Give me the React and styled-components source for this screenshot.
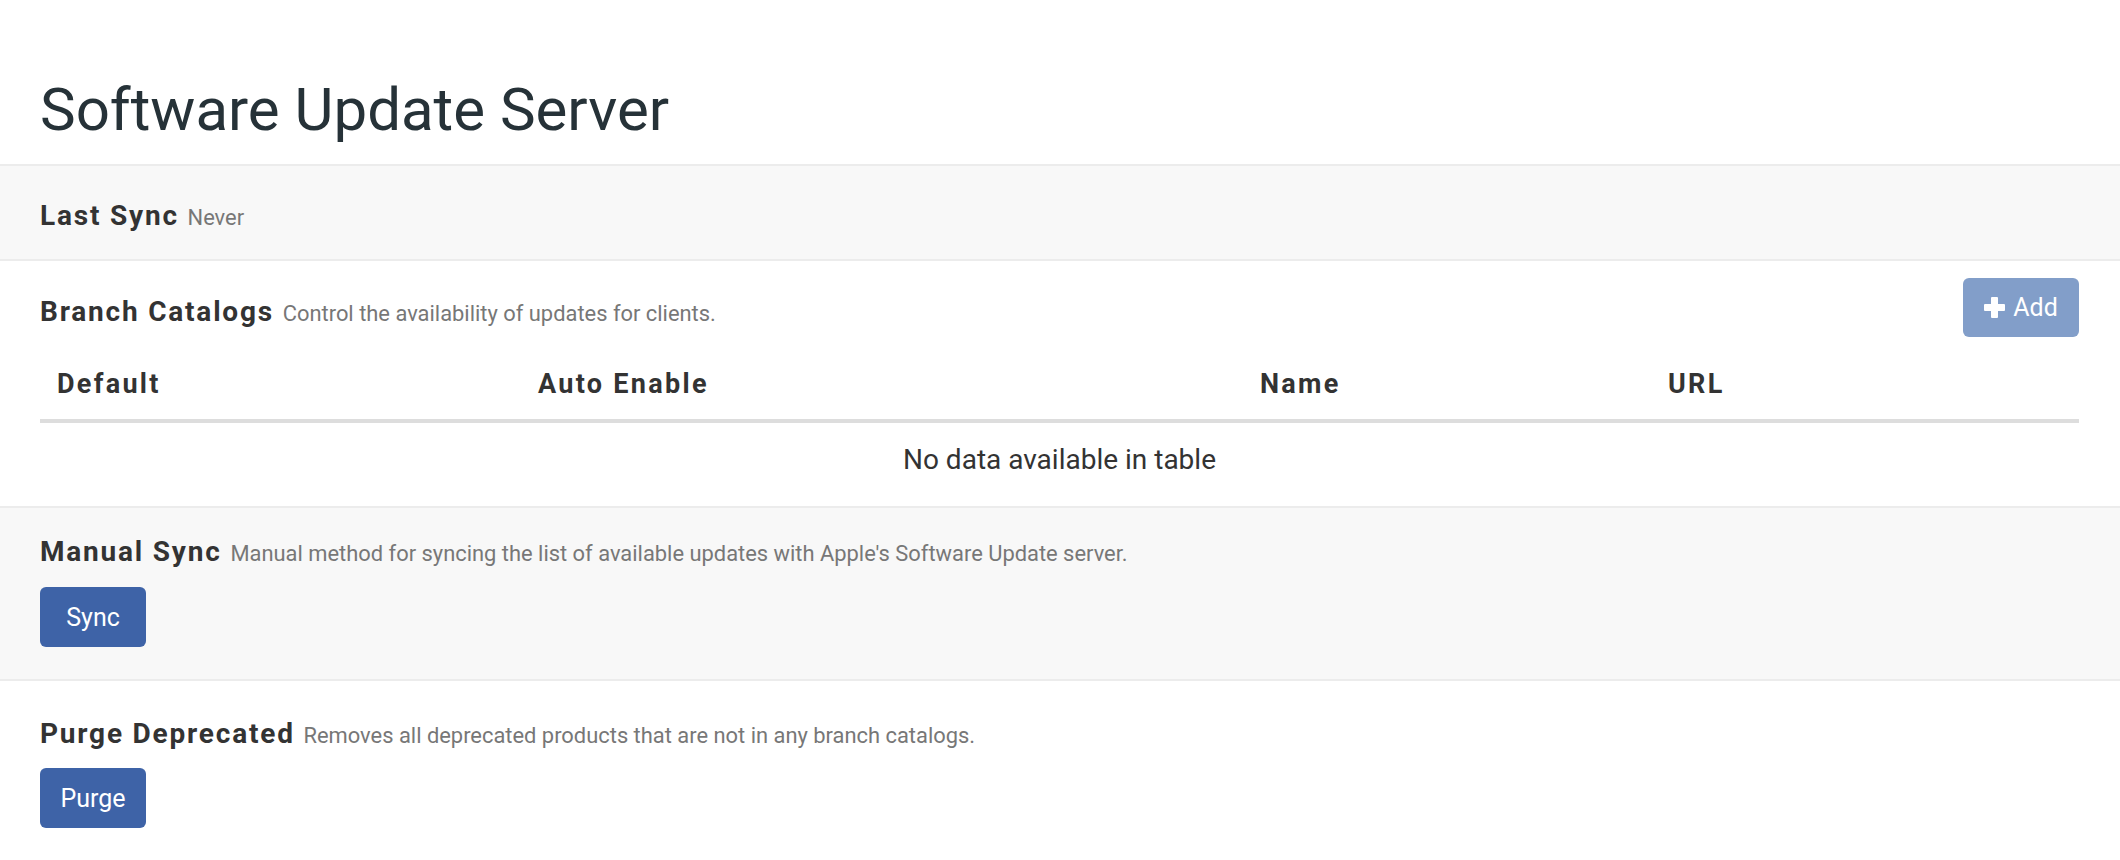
import React from 'react'
import styled, { createGlobalStyle } from 'styled-components'

const GlobalStyle = createGlobalStyle`
  html, body {
    margin: 0;
    padding: 0;
    background: #fff;
    font-family: Roboto, "Liberation Sans", Arial, sans-serif;
    color: #333;
  }
`

const PlusIcon = () => (
  <svg width="21" height="21" viewBox="0 0 21 21" aria-hidden="true">
    <rect x="7" y="0" width="7" height="21" rx="1" fill="#fff" />
    <rect x="0" y="7" width="21" height="7" rx="1" fill="#fff" />
  </svg>
)

const App = () => {
  return (
    <Page>
      <GlobalStyle />
      <TitleBlock>
        <PageTitle>Software Update Server</PageTitle>
      </TitleBlock>

      <Section $gray $pad="30px 41px 21px 40px">
        <SectionTitle>
          Last Sync <Hint>Never</Hint>
        </SectionTitle>
      </Section>

      <Section $pad="17px 41px 8px 40px">
        <HeadRow>
          <SectionTitle $offset="14px">
            Branch Catalogs <Hint>Control the availability of updates for clients.</Hint>
          </SectionTitle>
          <AddButton type="button" disabled>
            <PlusIcon />
            Add
          </AddButton>
        </HeadRow>
        <Table>
          <colgroup>
            <col style={{ width: 481 }} />
            <col style={{ width: 722 }} />
            <col style={{ width: 408 }} />
            <col />
          </colgroup>
          <thead>
            <tr>
              <Th>Default</Th>
              <Th>Auto Enable</Th>
              <Th>Name</Th>
              <Th>URL</Th>
            </tr>
          </thead>
          <tbody>
            <tr>
              <EmptyCell colSpan={4}>No data available in table</EmptyCell>
            </tr>
          </tbody>
        </Table>
      </Section>

      <Section $gray $pad="24px 41px 32px 40px" $gap="13px">
        <SectionTitle>
          Manual Sync{' '}
          <Hint>Manual method for syncing the list of available updates with Apple's Software Update server.</Hint>
        </SectionTitle>
        <ActionButton type="button">Sync</ActionButton>
      </Section>

      <Section $pad="33px 41px 32px 40px" $gap="12px">
        <SectionTitle>
          Purge Deprecated{' '}
          <Hint>Removes all deprecated products that are not in any branch catalogs.</Hint>
        </SectionTitle>
        <ActionButton type="button">Purge</ActionButton>
      </Section>
    </Page>
  )
}

export default App

const Page = styled.div`
  width: 2120px;
  min-height: 860px;
  background: #fff;
`

const TitleBlock = styled.div`
  padding: 74px 40px 18px;
`

const PageTitle = styled.h1`
  margin: 0;
  font-family: Roboto, "Liberation Sans", sans-serif;
  font-weight: 400;
  font-size: 60px;
  line-height: 72px;
  color: #263238;
`

const Section = styled.section`
  display: flex;
  flex-direction: column;
  align-items: flex-start;
  gap: ${(p) => p.$gap || '16px'};
  padding: ${(p) => p.$pad};
  background: ${(p) => (p.$gray ? '#f8f8f8' : '#fff')};
  border-top: 2px solid #ececec;
`

const HeadRow = styled.div`
  align-self: stretch;
  display: flex;
  justify-content: space-between;
  align-items: flex-start;
`

const SectionTitle = styled.h3`
  margin: ${(p) => p.$offset || 0} 0 0;
  font-family: Roboto, "Liberation Sans", sans-serif;
  font-size: 28px;
  line-height: 40px;
  font-weight: 700;
  letter-spacing: 1.8px;
  color: #333;
  white-space: nowrap;
`

const Hint = styled.small`
  font-size: 21.9px;
  font-weight: 400;
  letter-spacing: 0;
  color: #777;
`

const ButtonBase = styled.button`
  display: inline-flex;
  align-items: center;
  justify-content: center;
  height: 59px;
  border: none;
  border-radius: 6px;
  color: #fff;
  font-family: Roboto, "Liberation Sans", sans-serif;
  font-size: 25px;
  font-weight: 400;
`

const ActionButton = styled(ButtonBase)`
  width: 106px;
  height: 60px;
  background: #3e63a7;
  cursor: pointer;
`

const AddButton = styled(ButtonBase)`
  width: 116px;
  gap: 8px;
  padding: 0;
  background: #829ec9;
  cursor: not-allowed;
`

const Table = styled.table`
  width: 100%;
  margin-top: -1px;
  border-collapse: collapse;
  table-layout: fixed;
`

const Th = styled.th`
  padding: 12px 17px 15px;
  text-align: left;
  font-size: 27px;
  line-height: 40px;
  font-weight: 700;
  letter-spacing: 2.3px;
  color: #333;
  border-bottom: 4px solid #dddddd;
`

const EmptyCell = styled.td`
  padding: 19px 17px 20px;
  text-align: center;
  font-size: 28px;
  line-height: 36px;
  color: #333;
`
